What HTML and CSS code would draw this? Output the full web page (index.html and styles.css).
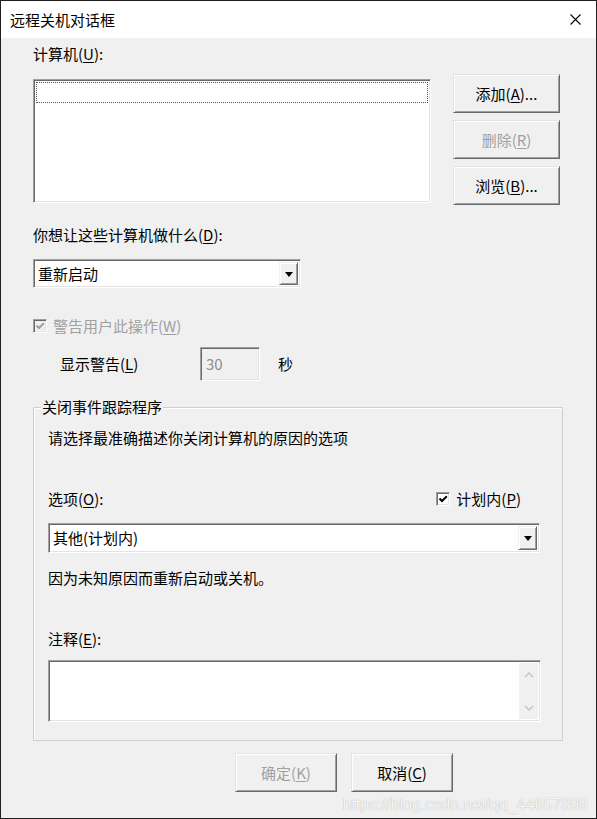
FILE: index.html
```html
<!DOCTYPE html>
<html>
<head>
    <meta charset="UTF-8">
    <title>远程关机对话框</title>
    <link rel="stylesheet" href="styles.css">
</head>
<body>
    <div class="window">
        <div class="title-bar">
            <span class="title">远程关机对话框</span>
            <span class="close-btn">
                <svg width="11" height="11" viewBox="0 0 11 11"><path d="M0.5 0.5 L10.5 10.5 M10.5 0.5 L0.5 10.5" stroke="#000" stroke-width="1.1" fill="none"/></svg>
            </span>
        </div>

        <div class="client">
            <div class="label">计算机(<u>U</u>):</div>
            <div class="computer-row">
                <div class="listbox sunken">
                    <div class="focus-row"></div>
                </div>
                <div class="side-buttons">
                    <div class="btn">添加(<u>A</u>)...</div>
                    <div class="btn disabled">删除(<u>R</u>)</div>
                    <div class="btn">浏览(<u>B</u>)...</div>
                </div>
            </div>

            <div class="label action-label">你想让这些计算机做什么(<u>D</u>):</div>
            <div class="combo action-combo sunken">
                <span class="combo-text">重新启动</span>
                <span class="combo-arrow"><span class="tri"></span></span>
            </div>

            <div class="check-row warn-check disabled">
                <span class="checkbox">
                    <svg width="10" height="10" viewBox="0 0 10 10"><path d="M1.5 4.5 L4 7 L8.8 2.2" stroke="#a0a0a0" stroke-width="2" fill="none"/></svg>
                </span>
                <span>警告用户此操作(<u>W</u>)</span>
            </div>

            <div class="warn-row">
                <span class="warn-label">显示警告(<u>L</u>)</span>
                <span class="num-input sunken">30</span>
                <span class="unit">秒</span>
            </div>

            <fieldset class="tracker">
                <legend>关闭事件跟踪程序</legend>
                <div class="label">请选择最准确描述你关闭计算机的原因的选项</div>

                <div class="option-row">
                    <span>选项(<u>O</u>):</span>
                    <span class="check-row planned">
                        <span class="checkbox">
                            <svg width="10" height="10" viewBox="0 0 10 10"><path d="M1.5 4.5 L4 7 L8.8 2.2" stroke="#000" stroke-width="2" fill="none"/></svg>
                        </span>
                        <span>计划内(<u>P</u>)</span>
                    </span>
                </div>

                <div class="combo reason-combo sunken">
                    <span class="combo-text">其他(计划内)</span>
                    <span class="combo-arrow"><span class="tri"></span></span>
                </div>

                <div class="label reason-text">因为未知原因而重新启动或关机。</div>

                <div class="label note-label">注释(<u>E</u>):</div>
                <div class="note-box sunken">
                    <div class="note-area"></div>
                    <div class="scrollbar">
                        <svg width="10" height="6" viewBox="0 0 10 6"><path d="M1 5 L5 1 L9 5" stroke="#c4c4c4" stroke-width="1.4" fill="none"/></svg>
                        <svg width="10" height="6" viewBox="0 0 10 6"><path d="M1 1 L5 5 L9 1" stroke="#c4c4c4" stroke-width="1.4" fill="none"/></svg>
                    </div>
                </div>
            </fieldset>

            <div class="footer-buttons">
                <div class="btn small disabled">确定(<u>K</u>)</div>
                <div class="btn small">取消(<u>C</u>)</div>
            </div>
        </div>

        <div class="watermark">https://blog.csdn.net/qq_44657899</div>
    </div>
</body>
</html>
```

FILE: styles.css
```css
/* Base */
body {
    margin: 0;
    font-family: "Noto Sans CJK SC", "Microsoft YaHei", sans-serif;
    font-size: 15px;
    line-height: 20px;
    color: #000;
    background: #fff;
}

u {
    text-decoration-thickness: 1px;
    text-underline-offset: 2px;
}

.window {
    position: relative;
    width: 597px;
    height: 819px;
    box-sizing: border-box;
    border: 1px solid #1f1f1f;
    display: flex;
    flex-direction: column;
}

/* Title bar */
.title-bar {
    height: 37px;
    flex-shrink: 0;
    display: flex;
    align-items: center;
    justify-content: space-between;
    padding-left: 9px;
    background: #fff;
}

.close-btn {
    display: flex;
    margin-right: 15px;
}

/* Client area */
.client {
    flex: 1;
    background: #f0f0f0;
    padding: 6px 0 0 32px;
}

.label {
    height: 20px;
}

/* 3D borders */
.sunken {
    box-sizing: border-box;
    border: 1px solid;
    border-color: #a0a0a0 #fff #fff #a0a0a0;
    box-shadow: inset 1px 1px 0 #696969, inset -1px -1px 0 #e3e3e3;
}

.btn {
    box-sizing: border-box;
    width: 107px;
    height: 39px;
    display: flex;
    align-items: center;
    justify-content: center;
    background: #f0f0f0;
    border: 1px solid;
    border-color: #e3e3e3 #696969 #696969 #e3e3e3;
    box-shadow: inset 1px 1px 0 #fff, inset -1px -1px 0 #a0a0a0;
}

.btn.disabled {
    color: #a0a0a0;
}

.btn.small {
    width: 102px;
}

/* Computer list */
.computer-row {
    display: flex;
    align-items: flex-start;
    gap: 22px;
    margin-top: 10px;
}

.listbox {
    width: 398px;
    height: 124px;
    margin-top: 5px;
    background: #fff;
    padding: 2px;
}

.focus-row {
    height: 21px;
    box-sizing: border-box;
    border: 1px dotted #555;
}

.side-buttons {
    display: flex;
    flex-direction: column;
    gap: 7px;
}

/* Combo boxes */
.action-label {
    margin-top: 20px;
}

.combo {
    display: flex;
    align-items: stretch;
    background: #fff;
    padding: 2px;
}

.action-combo {
    width: 268px;
    height: 29px;
    margin-top: 14px;
}

.combo-text {
    flex: 1;
    display: flex;
    align-items: center;
    padding-left: 2px;
}

.combo-arrow {
    width: 19px;
    box-sizing: border-box;
    display: flex;
    align-items: center;
    justify-content: center;
    background: #f0f0f0;
    border: 1px solid;
    border-color: #f0f0f0 #696969 #696969 #f0f0f0;
    box-shadow: inset 1px 1px 0 #fff, inset -1px -1px 0 #a0a0a0;
}

.tri {
    width: 0;
    height: 0;
    margin-top: 1px;
    border-left: 4px solid transparent;
    border-right: 4px solid transparent;
    border-top: 5px solid #000;
}

/* Checkboxes */
.check-row {
    display: flex;
    align-items: center;
    gap: 6px;
    height: 20px;
}

.check-row.disabled {
    color: #a0a0a0;
}

.warn-check {
    margin-top: 28px;
}

.checkbox {
    width: 14px;
    height: 14px;
    box-sizing: border-box;
    display: flex;
    align-items: center;
    justify-content: center;
    background: #fff;
    border: 1px solid;
    border-color: #a0a0a0 #fff #fff #a0a0a0;
    box-shadow: inset 1px 1px 0 #696969, inset -1px -1px 0 #e3e3e3;
}

.disabled .checkbox {
    background: #f0f0f0;
}

/* Warning time */
.warn-row {
    display: flex;
    align-items: center;
    height: 34px;
    margin-top: 11px;
    padding-left: 27px;
}

.warn-label {
    width: 140px;
}

.num-input {
    width: 60px;
    height: 34px;
    display: flex;
    align-items: center;
    padding-left: 5px;
    color: #8c8c8c;
    background: #f0f0f0;
}

.unit {
    margin-left: 18px;
}

/* Shutdown event tracker group */
.tracker {
    width: 530px;
    box-sizing: border-box;
    margin: 16px 0 0;
    padding: 11px 21px 18px 14px;
    border: 1px solid #cfcfcf;
    box-shadow: inset 1px 1px 0 #fff;
}

.tracker legend {
    padding: 0 1px;
    margin-left: -7px;
    line-height: 20px;
}

.option-row {
    display: flex;
    align-items: center;
    justify-content: space-between;
    height: 20px;
    margin-top: 41px;
}

.planned {
    margin-right: 20px;
}

.reason-combo {
    width: 492px;
    height: 30px;
    margin-top: 14px;
}

.reason-text {
    margin-top: 15px;
}

.note-label {
    margin-top: 41px;
}

.note-box {
    width: 493px;
    height: 62px;
    margin-top: 11px;
    display: flex;
    padding: 2px;
    background: #fff;
}

.note-area {
    flex: 1;
}

.scrollbar {
    width: 19px;
    background: #f0f0f0;
    display: flex;
    flex-direction: column;
    justify-content: space-between;
    align-items: center;
    padding: 9px 0 8px;
}

/* Bottom buttons */
.footer-buttons {
    display: flex;
    gap: 14px;
    margin: 12px 0 0 202px;
}

/* CSDN watermark */
.watermark {
    position: absolute;
    right: 8px;
    bottom: 3px;
    font-family: "Liberation Sans", Arial, sans-serif;
    font-size: 16px;
    line-height: 20px;
    color: rgba(255, 255, 255, 0.92);
    text-shadow: 0 0 1px rgba(0, 0, 0, 0.35);
}
```
